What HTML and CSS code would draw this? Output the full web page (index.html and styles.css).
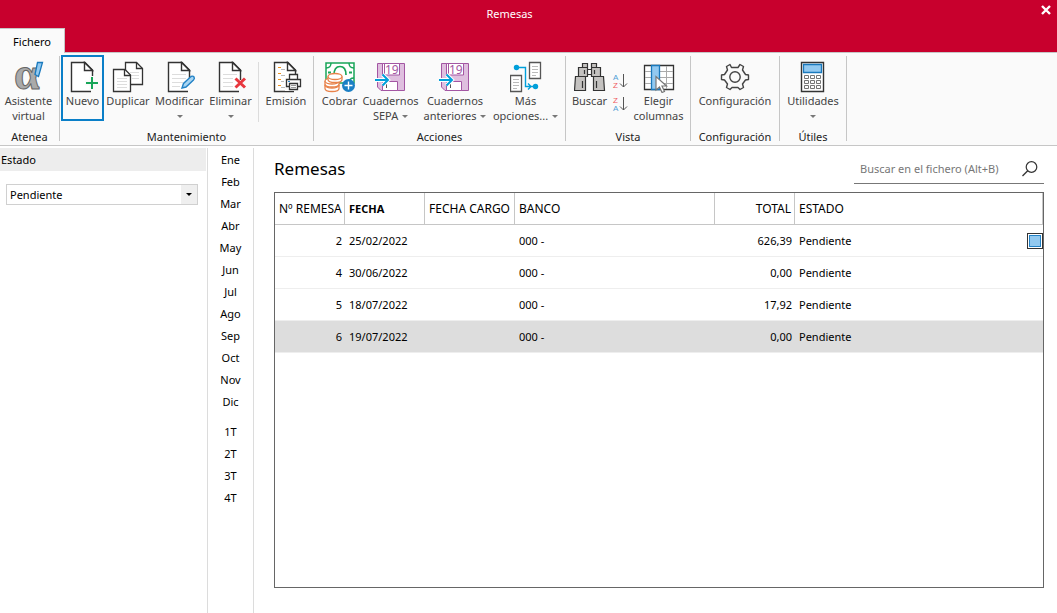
FILE: index.html
```html
<!DOCTYPE html>
<html lang="es">
<head>
<meta charset="utf-8">
<title>Remesas</title>
<link rel="stylesheet" href="styles.css">
</head>
<body>
<svg class="defs" aria-hidden="true">
  <defs>
    <g id="doc">
      <path d="M24 30.500H4.500V1.500H18L25.500 9V19" fill="#fff" stroke="#333" stroke-width="1.400"/>
      <path d="M17.500 1.500V9.500H25.500Z" fill="#fff" stroke="#333" stroke-width="1.400"/>
    </g>
    <g id="notebook">
      <path d="M2.500 2.500H29.500V29.500H6L2.500 26Z" fill="#dfbfdf" stroke="#a356a3"/>
      <path d="M7.500 2.500H24.500V14H7.500Z" fill="#fff" stroke="#a356a3"/>
      <path d="M9.500 3V13" stroke="#a356a3"/>
      <text x="10" y="13" font-size="12" fill="#a356a3">19</text>
      <path d="M7.500 29.500V20.500H22.500V29.500Z" fill="#fff" stroke="#a356a3"/>
      <path d="M11.500 23V27" stroke="#555"/>
      <path d="M0 19H13M7.500 13.500L13 19L7.500 24.500" fill="none" stroke="#fff" stroke-width="4"/>
      <path d="M0 19H13M7.500 13.500L13 19L7.500 24.500" fill="none" stroke="#009fda" stroke-width="2"/>
    </g>
  </defs>
</svg>
<header class="titlebar">
  <h1 class="titlebar-text">Remesas</h1>
  <button class="close" aria-label="Cerrar"><svg width="12" height="12" viewBox="0 0 12 12"><path d="M2 2L10 10M10 2L2 10" stroke="#fff" stroke-width="2.400"/></svg></button>
  <button class="tab">Fichero</button>
</header>

<nav class="ribbon">
  <section class="group group-atenea">
    <div class="tools">
      <button class="tool">
        <svg class="icon" viewBox="0 0 32 32"><text class="alpha" x="1" y="28">α</text><path d="M24.500 1.500H29.500L25.500 15.500L22 13.500Z" fill="#92c9f0" stroke="#1979bd" stroke-width="1.300"/></svg>
        <span>Asistente<br>virtual</span>
      </button>
    </div>
    <h2 class="group-name">Atenea</h2>
  </section>

  <section class="group group-mant">
    <div class="tools">
      <button class="tool tool-active">
        <svg class="icon" viewBox="0 0 32 32"><use href="#doc"/><path d="M18 22H32M25 15V29" stroke="#fafafa" stroke-width="5"/><path d="M19 22H31M25 16V28" stroke="#18a558" stroke-width="2"/></svg>
        <span>Nuevo</span>
      </button>
      <button class="tool tool-dup">
        <svg class="icon" viewBox="0 0 32 32"><path d="M13.500 1.500H24.500L30.500 7.500V23.500H13.500Z" fill="#fff" stroke="#333" stroke-width="1.300"/><path d="M24.500 1.500V7.500H30.500" fill="none" stroke="#333" stroke-width="1.300"/><path d="M18 11.500H27M18 14.500H27M20 17.500H27" stroke="#ddd"/><path d="M1.500 8.500H13L18.500 14V30.500H1.500Z" fill="#fff" stroke="#333" stroke-width="1.300"/><path d="M12.500 8.500V14.500H18.500" fill="none" stroke="#333" stroke-width="1.300"/><path d="M5 17.500H15M5 20.500H15M5 23.500H15M5 26.500H15" stroke="#ddd"/></svg>
        <span>Duplicar</span>
      </button>
      <button class="tool tool-mod">
        <svg class="icon" viewBox="0 0 32 32"><use href="#doc"/><path d="M8 13.500H22M8 17.500H22M8 21.500H19M8 25.500H16" stroke="#ddd"/><path d="M18 27L19.500 22.500L27 15.500Q29 14.500 30 16Q31 17.500 29.500 19L22 26Z" fill="#a9d5f2" stroke="#2382c6" stroke-width="1.400"/></svg>
        <span>Modificar</span><i class="caret"></i>
      </button>
      <button class="tool tool-del">
        <svg class="icon" viewBox="0 0 32 32"><use href="#doc"/><path d="M8 13.500H22M8 17.500H18M8 21.500H18M8 25.500H18" stroke="#ddd"/><path d="M20.500 17.500L30 26.500M30 17.500L20.500 26.500" stroke="#e8373e" stroke-width="3"/></svg>
        <span>Eliminar</span><i class="caret"></i>
      </button>
      <div class="divider"></div>
      <button class="tool tool-emi">
        <svg class="icon" viewBox="0 0 32 32"><use href="#doc"/><path d="M8 6.500H11M8 12.500H11M8 18.500H11M8 24.500H11" stroke="#f0941f"/><path d="M11 8.500H15M11 14.500H15M11 20.500H14M11 26.500H15" stroke="#bbb"/><path d="M15 17H32V30H15Z" fill="#fafafa"/><path d="M19.500 18.500V13.500H27.500V18.500M19.500 25.500H16.500V18.500H30.500V25.500H27.500" fill="#fff" stroke="#333" stroke-width="1.300"/><path d="M19.500 22.500H27.500V28.500H19.500Z" fill="#fff" stroke="#333" stroke-width="1.300"/><path d="M21 24.500H26M21 26.500H26" stroke="#999"/><path d="M18 20.500H20" stroke="#2382c6"/></svg>
        <span>Emisión</span>
      </button>
    </div>
    <h2 class="group-name">Mantenimiento</h2>
  </section>

  <section class="group group-acc">
    <div class="tools">
      <button class="tool tool-cob">
        <svg class="icon" viewBox="0 0 32 32"><path d="M2 2H30V22H2Z" fill="#fff" stroke="#18a558" stroke-width="1.500"/><path d="M2 7Q7 7 7 2M25 2Q25 7 30 7M30 17Q25 17 25 22" fill="none" stroke="#18a558" stroke-width="1.400"/><path d="M10 14Q10 5.500 16 5.500T22 14" fill="none" stroke="#18a558" stroke-width="1.700"/><path d="M4 11.500H7M25 11.500H28" stroke="#18a558" stroke-width="2"/><g fill="#fff" stroke="#e8824a" stroke-width="1.300"><path d="M1 24V27.500Q1 30.500 8 30.500T15 27.500V24"/><ellipse cx="8" cy="24" rx="7" ry="3"/><path d="M1 20V23Q1 26 8 26T15 23V20"/><ellipse cx="8" cy="20" rx="7" ry="3"/><path d="M4 15.500V18.500Q4 21.500 11 21.500T18 18.500V15.500"/><ellipse cx="11" cy="15.500" rx="7" ry="3"/></g><circle cx="24.500" cy="24.500" r="6.500" fill="#1b7fc4"/><path d="M20.500 24.500H28.500M24.500 20.500V28.500" stroke="#fff" stroke-width="1.400"/></svg>
        <span>Cobrar</span>
      </button>
      <button class="tool tool-sepa">
        <svg class="icon" viewBox="0 0 32 32"><use href="#notebook"/></svg>
        <span>Cuadernos<br>SEPA <i class="caret caret-inline"></i></span>
      </button>
      <button class="tool tool-ant">
        <svg class="icon" viewBox="0 0 32 32"><use href="#notebook"/></svg>
        <span>Cuadernos<br>anteriores <i class="caret caret-inline"></i></span>
      </button>
      <button class="tool tool-mas">
        <svg class="icon" viewBox="0 0 32 32"><path d="M19.500 1.500H30.500V17.500H19.500ZM.500 14.500H11.500V30.500H.500Z" fill="#fff" stroke="#555" stroke-width="1.300"/><path d="M22 5.500H28M22 8.500H28M22 11.500H28M22 14.500H26M3 18.500H9M3 21.500H9M3 24.500H9M3 27.500H7" stroke="#bbb"/><path d="M6 6.500H15.500V25.500H25M18 22.500L21 25.500L18 28.500" fill="none" stroke="#009fda" stroke-width="1.400"/><circle cx="6.500" cy="6.500" r="2.700" fill="#009fda"/><circle cx="25.500" cy="25.500" r="2.700" fill="#009fda"/></svg>
        <span>Más<br>opciones... <i class="caret caret-inline"></i></span>
      </button>
    </div>
    <h2 class="group-name">Acciones</h2>
  </section>

  <section class="group group-vista">
    <div class="tools">
      <button class="tool tool-bus">
        <svg class="icon" viewBox="0 0 32 32"><g fill="#c4c2c0" stroke="#333" stroke-width="1.200"><path d="M12.500 8.500H18.500V13.500H12.500Z" fill="#fff"/><path d="M8.500 2.500H13.500V6.500H8.500ZM17.500 2.500H22.500V6.500H17.500ZM4.500 6.500H13.500V15.500H4.500ZM17.500 6.500H26.500V15.500H17.500ZM1.500 15.500H11.500V29.500H.500ZM19.500 15.500H29.500L30.500 29.500H19.500Z"/><path d="M10.500 9V13M20.500 9V13M8.500 20V27M22.500 20V27"/></g></svg>
        <span>Buscar</span>
      </button>
      <div class="sorts">
        <button class="sort" aria-label="Orden ascendente"><svg width="16" height="16" viewBox="0 0 16 16"><text x="1" y="7" fill="#4f9fd6">A</text><text x="1" y="15" fill="#ef5a60">Z</text><path d="M11.500 1V14M8 10.500L11.500 14L15 10.500" fill="none" stroke="#555"/></svg></button>
        <button class="sort" aria-label="Orden descendente"><svg width="16" height="16" viewBox="0 0 16 16"><text x="1" y="7" fill="#ef5a60">Z</text><text x="1" y="15" fill="#4f9fd6">A</text><path d="M11.500 1V14M8 10.500L11.500 14L15 10.500" fill="none" stroke="#555"/></svg></button>
      </div>
      <button class="tool tool-col">
        <svg class="icon" viewBox="0 0 32 32"><path d="M1.500 4.500H30.500V28.500H1.500Z" fill="#fff" stroke="#333" stroke-width="1.300"/><path d="M2 10.500H30M2 16.500H30M2 22.500H30M23.500 5V28" stroke="#aaa"/><path d="M8.500 4.500H16.500V28.500H8.500Z" fill="#92c9f0" stroke="#1979bd" stroke-width="1.300"/><path d="M13 15.500V29L16.500 26L19 31.500L21.500 30.500L19 25H23.500Z" fill="#fff" stroke="#777" stroke-width="1.200"/></svg>
        <span>Elegir<br>columnas</span>
      </button>
    </div>
    <h2 class="group-name">Vista</h2>
  </section>

  <section class="group group-conf">
    <div class="tools">
      <button class="tool">
        <svg class="icon" viewBox="0 0 32 32"><g fill="none" stroke="#444" stroke-width="1.400" stroke-linejoin="round"><path d="M12.500 6.500L11 3.500L7.500 5.500L8.500 9L5.500 13.500L2.500 14V18.500L5.500 19L8.500 23L7.500 26.500L11 28.500L13 26.500H19L21 28.500L24.500 26.500L23.500 23L26.500 19L29.500 18.500V14L26.500 13.500L23.500 9L24.500 5.500L21 3.500L19 6.500Z"/><circle cx="16" cy="16" r="5.200"/></g></svg>
        <span>Configuración</span>
      </button>
    </div>
    <h2 class="group-name">Configuración</h2>
  </section>

  <section class="group group-util">
    <div class="tools">
      <button class="tool">
        <svg class="icon" viewBox="0 0 32 32"><path d="M4.500 1.500H26.500V30.500H4.500Z" fill="#fff" stroke="#333" stroke-width="1.400"/><path d="M6.500 3.500H24.500V11.500H6.500Z" fill="#92c9f0" stroke="#1979bd" stroke-width="1.300"/><path d="M7.500 14.500H11.500V17.500H7.500ZM13.500 14.500H17.500V17.500H13.500ZM19.500 14.500H23.500V17.500H19.500ZM7.500 19.500H11.500V22.500H7.500ZM13.500 19.500H17.500V22.500H13.500ZM19.500 19.500H23.500V22.500H19.500ZM7.500 24.500H11.500V27.500H7.500ZM13.500 24.500H17.500V27.500H13.500ZM19.500 24.500H23.500V27.500H19.500Z" fill="none" stroke="#777"/></svg>
        <span>Utilidades</span><i class="caret"></i>
      </button>
    </div>
    <h2 class="group-name">Útiles</h2>
  </section>
</nav>

<main class="workspace">
  <aside class="filters">
    <label class="filter-title" for="estado">Estado</label>
    <div class="select-box">
      <select id="estado"><option>Pendiente</option></select>
      <span class="select-arrow"><i></i></span>
    </div>
  </aside>
  <nav class="periods">
    <div class="period-list">
      <button>Ene</button><button>Feb</button><button>Mar</button><button>Abr</button><button>May</button><button>Jun</button><button>Jul</button><button>Ago</button><button>Sep</button><button>Oct</button><button>Nov</button><button>Dic</button>
    </div>
    <div class="period-list">
      <button>1T</button><button>2T</button><button>3T</button><button>4T</button>
    </div>
  </nav>
  <section class="content">
    <div class="content-head">
      <h2 class="content-title">Remesas</h2>
      <div class="search">
        <input type="text" aria-label="Buscar en el fichero" placeholder="Buscar en el fichero (Alt+B)">
        <svg width="16" height="16" viewBox="0 0 16 16"><circle cx="9.500" cy="6" r="5.300" fill="none" stroke="#333" stroke-width="1.200"/><path d="M5.700 9.800L.500 15" stroke="#333" stroke-width="1.300"/></svg>
      </div>
    </div>
    <div class="grid">
      <table>
        <colgroup><col class="c-num"><col class="c-date"><col class="c-charge"><col class="c-bank"><col class="c-total"><col></colgroup>
        <thead><tr><th class="num">Nº REMESA</th><th class="sorted">FECHA</th><th>FECHA CARGO</th><th>BANCO</th><th class="num">TOTAL</th><th>ESTADO</th></tr></thead>
        <tbody>
          <tr><td class="num">2</td><td>25/02/2022</td><td></td><td>000 -</td><td class="num">626,39</td><td><div class="state">Pendiente<span class="mark"></span></div></td></tr>
          <tr><td class="num">4</td><td>30/06/2022</td><td></td><td>000 -</td><td class="num">0,00</td><td>Pendiente</td></tr>
          <tr><td class="num">5</td><td>18/07/2022</td><td></td><td>000 -</td><td class="num">17,92</td><td>Pendiente</td></tr>
          <tr class="selected"><td class="num">6</td><td>19/07/2022</td><td></td><td>000 -</td><td class="num">0,00</td><td>Pendiente</td></tr>
        </tbody>
      </table>
    </div>
  </section>
</main>
</body>
</html>
```
FILE: styles.css
```css
* { box-sizing: border-box; }
body {
  margin: 0;
  min-height: 100vh;
  display: flex;
  flex-direction: column;
  background: #fff;
  color: #000;
  font: 11px/15px "Noto Sans", "Open Sans", sans-serif;
}
button, input, select { font: inherit; color: inherit; }
button { border: 0; padding: 0; background: none; }
h1, h2 { margin: 0; font-size: 11px; font-weight: 400; }
.defs { position: absolute; width: 0; height: 0; }

.titlebar {
  display: grid;
  grid-template-columns: 65px 1fr 65px;
  grid-template-rows: 28px 24px;
  background: #c8002d;
  border-bottom: 1px solid #c6c6c6;
  color: #fff;
}
.titlebar-text { grid-column: 1 / 4; grid-row: 1; text-align: center; padding-right: 38px; line-height: 28px; }
.close { grid-column: 3; grid-row: 1; justify-self: end; align-self: start; padding: 4px; height: 20px; margin-right: 1px; }
.close svg { display: block; }
.tab { grid-column: 1; grid-row: 2; margin-bottom: -1px; background: #fafafa; color: #000; border-top: 1px solid #c6c6c6; border-right: 1px solid #c6c6c6; }

.ribbon {
  display: flex;
  padding-top: 3px;
  background: #fafafa;
  border-bottom: 1px solid #c6c6c6;
}
.group {
  flex: none;
  display: flex;
  flex-direction: column;
  border-right: 1px solid #c6c6c6;
  margin-bottom: 4px;
  height: 85px;
}
.group-atenea { width: 60px; }
.group-mant { width: 254px; }
.group-acc { width: 252px; }
.group-vista { width: 125px; }
.group-conf { width: 89px; }
.group-util { width: 67px; }
.tools { display: flex; flex: none; height: 66px; padding: 0 1px; justify-content: center; }
.group-atenea .tools { padding-right: 3px; }
.group-mant .tools { justify-content: flex-start; }
.group-name { text-align: center; line-height: 15px; padding-top: 7px; color: #222; }
.tool {
  display: flex;
  flex-direction: column;
  align-items: center;
  padding-top: 5px;
  color: #444;
  white-space: nowrap;
}
.tool-active { width: 43px; margin: -1px 0 1px; padding-top: 4px; border: 2px solid #0a7fc8; }
.tool-dup { width: 48px; }
.tool-mod { width: 55px; }
.tool-del { width: 47px; }
.tool-emi { width: 48px; }
.tool-cob { width: 43px; }
.tool-sepa { width: 59px; }
.tool-ant { width: 70px; }
.tool-mas { width: 71px; }
.tool-bus { width: 41px; }
.tool-col { width: 57px; }
.tool > span { text-align: center; }
.icon { flex: none; width: 32px; height: 32px; }
.icon text { font-family: "Noto Sans", sans-serif; }
.icon .alpha {
  font: bold 46px "Liberation Serif", serif;
  fill: #aaa;
  stroke: #666;
  stroke-width: 1px;
}
.caret { border: 3px solid transparent; border-top-color: #777; border-bottom: 0; margin-top: 7px; }
.caret-inline { display: inline-block; margin: 0 0 2px 1px; }
.divider { width: 1px; height: 60px; margin: 6px 3px 0 4px; background: #dcdcdc; }
.sorts { width: 20px; display: flex; flex-direction: column; align-items: center; gap: 7px; padding-top: 17px; }
.sort { height: 16px; }
.sort svg { display: block; }
.sort text { font: 8px "Liberation Sans", sans-serif; }

.workspace { flex: 1; display: flex; padding-top: 2px; }
.filters { width: 207px; flex: none; }
.filter-title { display: block; margin-right: 1px; padding: 4px 1px; background: #ededed; }
.select-box { position: relative; margin: 13px 9px 0 6px; }
.select-box select {
  appearance: none;
  display: block;
  width: 100%;
  height: 21px;
  padding: 0 3px;
  border: 1px solid #d0d0d0;
  border-radius: 0;
  background: #fff;
}
.select-arrow {
  position: absolute;
  inset: 1px 1px 1px auto;
  width: 16px;
  display: flex;
  align-items: center;
  justify-content: center;
  background: #efefef;
  pointer-events: none;
}
.select-arrow i { border: 3px solid transparent; border-top-color: #000; border-bottom: 0; }

.periods {
  width: 47px;
  flex: none;
  display: flex;
  flex-direction: column;
  gap: 8px;
  border: solid #dcdcdc;
  border-width: 0 1px;
}
.period-list { display: flex; flex-direction: column; }
.period-list button { height: 22px; }

.content { flex: 1; display: flex; flex-direction: column; padding: 6px 13px 25px 20px; }
.content-head { display: flex; justify-content: space-between; height: 38px; }
.content-title { font-size: 17px; line-height: 30px; }
.search {
  display: flex;
  align-items: center;
  width: 190px;
  height: 30px;
  padding: 0 6px;
  border-bottom: 1px solid #777;
}
.search input { flex: 1; min-width: 0; padding: 0; border: 0; outline: 0; background: none; }
.search input::placeholder { color: #777; opacity: 1; }
.grid { flex: 1; border: 1px solid #666; }
table { width: 100%; table-layout: fixed; border-collapse: separate; border-spacing: 0; }
.c-num { width: 70px; }
.c-date { width: 80px; }
.c-charge { width: 90px; }
.c-bank { width: 200px; }
.c-total { width: 80px; }
th, td { height: 32px; padding: 0 3px 0 4px; text-align: left; white-space: nowrap; }
th { font-weight: 400; font-size: 12px; border-right: 1px solid #c6c6c6; border-bottom: 1px solid #c6c6c6; }
th.sorted { font-weight: 700; font-size: 11px; }
td { border-bottom: 1px solid #eee; }
th.num, td.num { text-align: right; }
td:last-child { padding-right: 0; }
.selected td { background: #ddd; }
.state { display: flex; align-items: center; justify-content: space-between; }
.mark { width: 16px; height: 16px; border: 1px solid #333; background: #92c9f0; box-shadow: inset 0 0 0 1px #fff, inset 0 0 0 2px #2382c6; }
```
